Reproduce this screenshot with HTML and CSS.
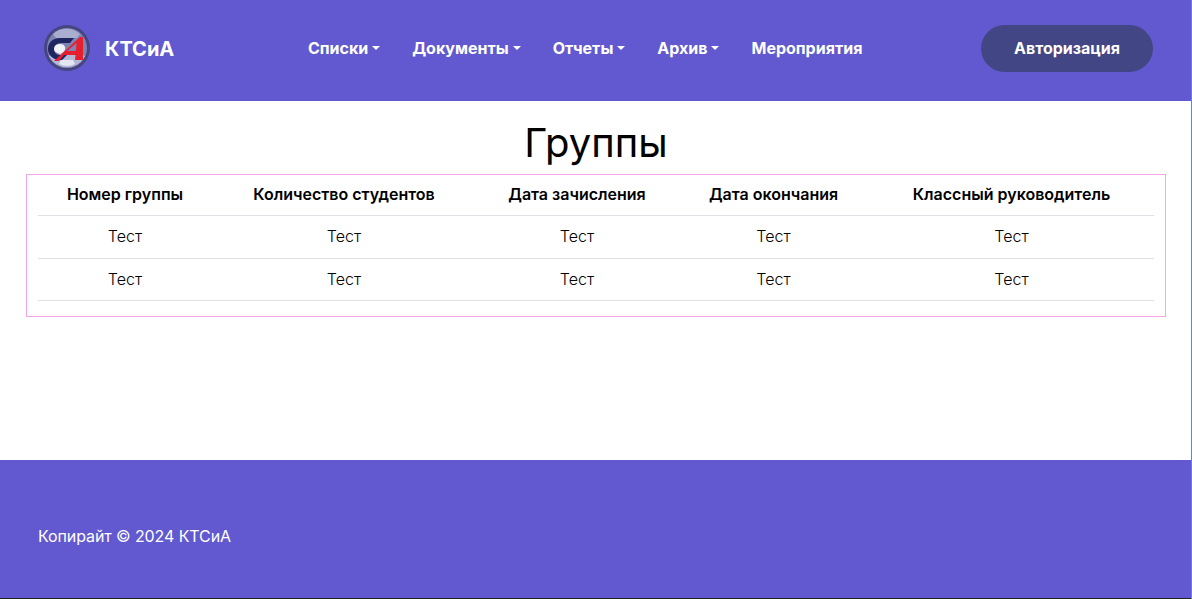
FILE: index.html
```html
<!DOCTYPE html>
<html lang="ru">
<head>
    <meta charset="UTF-8">
    <meta name="viewport" content="width=device-width, initial-scale=1.0">
    <title>Группы</title>
    <link rel="stylesheet" href="styles.css">
</head>
<body>
    <header class="header">
        <a class="brand" href="#">
            <svg class="brand-logo" viewBox="0 0 48 48" width="48" height="48">
                <circle cx="24" cy="24" r="23" fill="#45467e"/>
                <circle cx="24" cy="24" r="20" fill="#7f83b2"/>
                <path d="M10 10a20 20 0 0 1 27 0l-3 4H13z" fill="#a9add0"/>
                <path d="M6 32a20 20 0 0 0 36 0l-4-2H10z" fill="#b4b7d6"/>
                <path d="M16 40a18 18 0 0 0 16 0l-2-4H18z" fill="#e3e5f1"/>
                <path d="M31 14H17C9 14 5 19 5 25s5 11 12 11h2l5-5h-6c-5 0-7-3-7-6s3-6 7-6h9z" fill="#1f2560"/>
                <path d="M13 21c4-2 8-1 9 2 1 2-1 6-5 7-4-1-6-3-6-5 0-2 1-3 2-4z" fill="#f1f2f8"/>
                <path d="M11 37 37 13h3v23h-8l.5-5H21l-5 6zM24 27h8.800l.7-8z" fill="#e61f2e" fill-rule="evenodd"/>
            </svg>
            <span class="brand-name">КТСиА</span>
        </a>
        <nav class="nav">
            <a class="nav-link dropdown" href="#">Списки</a>
            <a class="nav-link dropdown" href="#">Документы</a>
            <a class="nav-link dropdown" href="#">Отчеты</a>
            <a class="nav-link dropdown" href="#">Архив</a>
            <a class="nav-link" href="#">Мероприятия</a>
        </nav>
        <button class="login" type="button">Авторизация</button>
    </header>
    <main class="content">
        <h1>Группы</h1>
        <div class="table-box">
            <table>
                <thead>
                    <tr>
                        <th class="col-1">Номер группы</th>
                        <th class="col-2">Количество студентов</th>
                        <th class="col-3">Дата зачисления</th>
                        <th class="col-4">Дата окончания</th>
                        <th class="col-5">Классный руководитель</th>
                    </tr>
                </thead>
                <tbody>
                    <tr>
                        <td>Тест</td>
                        <td>Тест</td>
                        <td>Тест</td>
                        <td>Тест</td>
                        <td>Тест</td>
                    </tr>
                    <tr>
                        <td>Тест</td>
                        <td>Тест</td>
                        <td>Тест</td>
                        <td>Тест</td>
                        <td>Тест</td>
                    </tr>
                </tbody>
            </table>
        </div>
    </main>
    <footer class="footer">Копирайт © 2024 КТСиА</footer>
</body>
</html>
```

FILE: styles.css
```css
* {
    box-sizing: border-box;
}
body {
    margin: 0;
    font-family: Inter, "Noto Sans", sans-serif;
    font-size: 16px;
    line-height: 1.5;
    color: #000;
    background-color: #fff;
    border-right: 1px solid #4a8fdb;
}
.header {
    display: flex;
    align-items: center;
    justify-content: space-between;
    height: 101px;
    padding: 0 38px 5px 43px;
    background-color: #6259d1;
}
.brand {
    display: flex;
    align-items: center;
    gap: 14px;
    color: #fff;
    font-size: 20px;
    font-weight: 700;
    text-decoration: none;
}
.brand-logo {
    filter: blur(0.4px);
}
.brand-name {
    padding-top: 2px;
}
.nav {
    display: flex;
    gap: 32px;
    margin-left: 15px;
}
.nav-link {
    color: #fff;
    font-weight: 700;
    text-decoration: none;
}
.dropdown::after {
    content: "";
    display: inline-block;
    margin-left: 4px;
    vertical-align: 4px;
    border-top: 4.8px solid #fff;
    border-left: 4.8px solid transparent;
    border-right: 4.8px solid transparent;
}
.login {
    width: 172px;
    height: 47px;
    border: none;
    border-radius: 24px;
    background-color: #434685;
    color: #fff;
    font-family: inherit;
    font-size: 16px;
    font-weight: 700;
}
.content {
    height: 359px;
    padding: 18px 25px 0 26px;
}
h1 {
    margin: 0;
    height: 55px;
    text-align: center;
    font-size: 40px;
    font-weight: 400;
    line-height: 48px;
}
.table-box {
    padding: 0 11px 15px;
    border: 1px solid #f7a3e8;
}
table {
    width: 100%;
    border-collapse: collapse;
    table-layout: fixed;
    text-align: center;
}
th,
td {
    border-bottom: 1px solid #dee2e6;
}
th {
    height: 40px;
    padding: 7px 0 9px;
    font-weight: 600;
}
td {
    height: 43px;
    padding: 8px 0 0;
    vertical-align: top;
    font-weight: 300;
}
tbody tr:last-child td {
    height: 42px;
}
.col-1 {
    width: 174px;
}
.col-2 {
    width: 264px;
}
.col-3 {
    width: 202px;
}
.col-4 {
    width: 191px;
}
.footer {
    display: flex;
    align-items: center;
    height: 139px;
    padding: 14px 38px 0;
    background-color: #6259d1;
    color: #fff;
    border-bottom: 1px solid #222;
    letter-spacing: -0.1px;
}
```
